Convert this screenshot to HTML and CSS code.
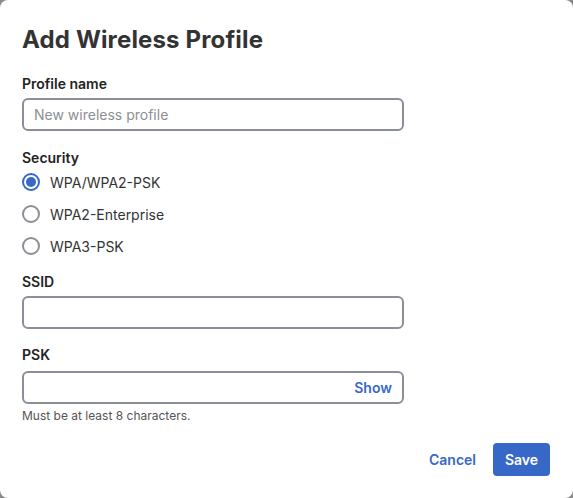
FILE: index.html
```html
<!DOCTYPE html>
<html lang="en">
<head>
  <meta charset="UTF-8">
  <meta name="viewport" content="width=device-width, initial-scale=1.0">
  <title>Add Wireless Profile</title>
  <link rel="stylesheet" href="styles.css">
</head>
<body>
  <div class="dialog">
    <h1 class="title">Add Wireless Profile</h1>

    <div class="field first">
      <label class="label" for="name">Profile name</label>
      <input class="textbox" id="name" type="text" placeholder="New wireless profile">
    </div>

    <div class="field security">
      <div class="label">Security</div>
      <div class="radios">
        <label class="radio"><span class="dot checked"></span>WPA/WPA2-PSK</label>
        <label class="radio"><span class="dot"></span>WPA2-Enterprise</label>
        <label class="radio"><span class="dot"></span>WPA3-PSK</label>
      </div>
    </div>

    <div class="field ssid">
      <label class="label" for="ssid">SSID</label>
      <input class="textbox" id="ssid" type="text">
    </div>

    <div class="field psk">
      <label class="label" for="psk">PSK</label>
      <div class="textbox withbtn">
        <input id="psk" type="password">
        <button class="link show">Show</button>
      </div>
      <div class="hint">Must be at least 8 characters.</div>
    </div>

    <div class="actions">
      <button class="link">Cancel</button>
      <button class="primary">Save</button>
    </div>
  </div>
</body>
</html>
```

FILE: styles.css
```css
* {
  font-family: Inter, "Noto Sans", sans-serif;
  box-sizing: border-box;
}

body {
  margin: 0;
  background-color: #8a8a8a;
}

.dialog {
  width: 573px;
  height: 498px;
  background-color: white;
  border-radius: 8px;
  padding: 25px 22px 0 22px;
  color: #222;
}

.title {
  margin: 0;
  font-size: 24px;
  line-height: 30px;
  font-weight: 700;
  color: #333;
  letter-spacing: 0.15px;
}

.field { width: 382px; }
.field.first { margin-top: 19px; }
.field.security { margin-top: 17px; }
.field.ssid { margin-top: 10px; }
.field.psk { margin-top: 16px; }

.label {
  display: block;
  font-size: 14px;
  line-height: 20px;
  font-weight: 600;
  color: #222;
  margin-bottom: 4px;
}
.psk .label { margin-bottom: 6px; }

.textbox {
  display: block;
  width: 382px;
  height: 33px;
  border: 2px solid #8b8f97;
  border-radius: 6px;
  padding: 0 10px;
  font-size: 14px;
  color: #222;
  outline: none;
}
.textbox::placeholder { color: #8d8f94; }

.withbtn {
  display: flex;
  align-items: center;
  padding-right: 10px;
}
.withbtn input {
  flex: 1;
  border: none;
  outline: none;
  font-size: 14px;
  padding: 0;
  min-width: 0;
}

.radios {
  margin-top: -6px;
}
.radio {
  display: flex;
  align-items: center;
  height: 32px;
  font-size: 14px;
  color: #333;
}
.dot {
  width: 18px;
  height: 18px;
  border: 2px solid #8b8f97;
  border-radius: 50%;
  margin-right: 10px;
  display: flex;
  align-items: center;
  justify-content: center;
}
.dot.checked { border-color: #3768c8; }
.dot.checked::after {
  content: "";
  width: 10px;
  height: 10px;
  border-radius: 50%;
  background-color: #3768c8;
}

.hint {
  margin-top: 4px;
  font-size: 12px;
  line-height: 16px;
  color: #555;
}

button { border: none; background: none; cursor: pointer; }

.link {
  color: #3768c8;
  font-size: 14px;
  font-weight: 600;
  padding: 0;
}

.actions {
  display: flex;
  justify-content: flex-end;
  align-items: center;
  gap: 17px;
  margin-top: 19px;
  margin-right: 1px;
}

.primary {
  background-color: #3768c8;
  color: white;
  font-size: 14px;
  font-weight: 600;
  height: 33px;
  width: 57px;
  border-radius: 4px;
}
```
